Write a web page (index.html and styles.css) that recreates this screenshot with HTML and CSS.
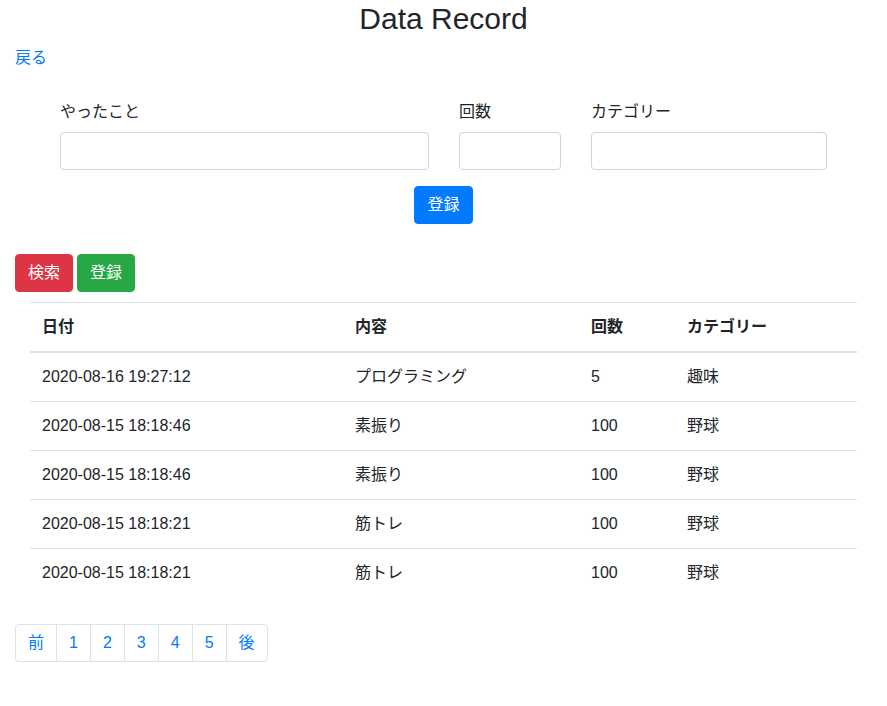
FILE: index.html
```html
<!DOCTYPE html>
<html lang="ja">
<head>
<meta charset="utf-8">
<title>Data Record</title>
<link rel="stylesheet" href="styles.css">
</head>
<body>
<div class="page">
  <h1 class="title">Data Record</h1>
  <a class="back" href="#">戻る</a>

  <form class="entry">
    <div class="form-grid">
      <div class="field">
        <label>やったこと</label>
        <input class="input" type="text">
      </div>
      <div class="field">
        <label>回数</label>
        <input class="input" type="text">
      </div>
      <div class="field">
        <label>カテゴリー</label>
        <input class="input" type="text">
      </div>
    </div>
    <div class="submit-row">
      <button type="button" class="btn btn-primary">登録</button>
    </div>
  </form>

  <div class="actions">
    <button type="button" class="btn btn-danger">検索</button>
    <button type="button" class="btn btn-success">登録</button>
  </div>

  <table class="records">
    <thead>
      <tr>
        <th class="c-date">日付</th>
        <th class="c-content">内容</th>
        <th class="c-count">回数</th>
        <th class="c-cat">カテゴリー</th>
      </tr>
    </thead>
    <tbody>
      <tr><td>2020-08-16 19:27:12</td><td>プログラミング</td><td>5</td><td>趣味</td></tr>
      <tr><td>2020-08-15 18:18:46</td><td>素振り</td><td>100</td><td>野球</td></tr>
      <tr><td>2020-08-15 18:18:46</td><td>素振り</td><td>100</td><td>野球</td></tr>
      <tr><td>2020-08-15 18:18:21</td><td>筋トレ</td><td>100</td><td>野球</td></tr>
      <tr><td>2020-08-15 18:18:21</td><td>筋トレ</td><td>100</td><td>野球</td></tr>
    </tbody>
  </table>

  <ul class="pagination">
    <li><a href="#">前</a></li>
    <li><a href="#">1</a></li>
    <li><a href="#">2</a></li>
    <li><a href="#">3</a></li>
    <li><a href="#">4</a></li>
    <li><a href="#">5</a></li>
    <li><a href="#">後</a></li>
  </ul>
</div>
</body>
</html>
```
FILE: styles.css
```css
* { box-sizing: border-box; }

body {
  margin: 0;
  font-family: "Liberation Sans", "Noto Sans CJK JP", sans-serif;
  font-size: 16px;
  line-height: 1.5;
  color: #212529;
  background: #fff;
}

.page {
  padding: 0 15px;
}

.title {
  margin: 0;
  text-align: center;
  font-size: 30px;
  font-weight: 400;
  line-height: 38px;
}

.back {
  display: inline-block;
  margin-top: 8px;
  color: #007bff;
  text-decoration: none;
}

.entry {
  margin-top: 30px;
}

.form-grid {
  display: grid;
  grid-template-columns: 369px 102px 236px;
  column-gap: 30px;
  justify-content: center;
}

.field label {
  display: block;
  margin-bottom: 8px;
}

.input {
  display: block;
  width: 100%;
  height: 38px;
  padding: 6px 12px;
  font: inherit;
  color: #495057;
  border: 1px solid #ced4da;
  border-radius: 4px;
  background: #fff;
}

.submit-row {
  margin-top: 16px;
  text-align: center;
}

.btn {
  display: inline-block;
  padding: 6px 12px;
  font: inherit;
  line-height: 24px;
  border: 1px solid transparent;
  border-radius: 4px;
  color: #fff;
  cursor: pointer;
}

.btn-primary { background: #007bff; border-color: #007bff; }
.btn-danger { background: #dc3545; border-color: #dc3545; }
.btn-success { background: #28a745; border-color: #28a745; }

.actions {
  margin-top: 30px;
  display: flex;
  gap: 4px;
}

.records {
  margin: 10px 15px 0;
  width: 827px;
  border-collapse: collapse;
}

.records th,
.records td {
  padding: 12px;
  text-align: left;
  vertical-align: top;
  border-top: 1px solid #dee2e6;
  line-height: 24px;
}

.records th {
  font-weight: bold;
  border-bottom: 2px solid #dee2e6;
}

.records thead + tbody tr:first-child td {
  border-top: 0;
}

.c-date { width: 313px; }
.c-content { width: 236px; }
.c-count { width: 96px; }
.c-cat { width: 182px; }

.pagination {
  display: flex;
  list-style: none;
  margin: 27px 0 0;
  padding: 0;
}

.pagination li a {
  display: block;
  padding: 6px 12px;
  line-height: 24px;
  color: #007bff;
  text-decoration: none;
  border: 1px solid #dee2e6;
  margin-left: -1px;
  background: #fff;
}

.pagination li:first-child a {
  margin-left: 0;
  border-radius: 4px 0 0 4px;
}

.pagination li:last-child a {
  border-radius: 0 4px 4px 0;
}
```
